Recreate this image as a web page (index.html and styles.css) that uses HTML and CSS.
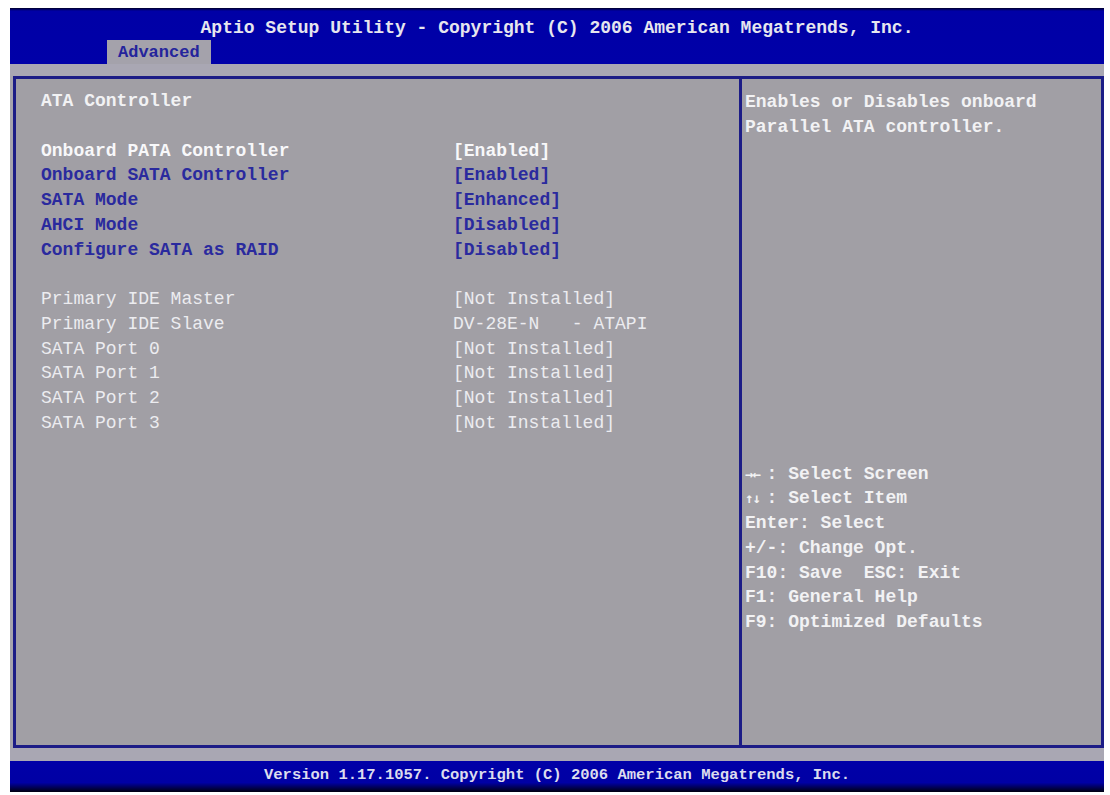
FILE: index.html
```html
<!DOCTYPE html>
<html lang="en">
<head>
    <meta charset="UTF-8">
    <meta name="viewport" content="width=device-width, initial-scale=1.0">
    <title>Aptio Setup Utility</title>
    <link rel="stylesheet" href="styles.css">
</head>
<body>

<div class="screen">

    <!-- Title bar with the tab row -->
    <div class="header">
        <div class="title">Aptio Setup Utility - Copyright (C) 2006 American Megatrends, Inc.</div>
        <div class="tabs">
            <span class="tab active">Advanced</span>
        </div>
    </div>

    <div class="strip"></div>

    <!-- Main frame -->
    <div class="frame">
        <div class="menu">
            <div class="line heading">ATA Controller</div>
            <div class="line"></div>

            <div class="item selected"><span>Onboard PATA Controller</span><span>[Enabled]</span></div>
            <div class="item option"><span>Onboard SATA Controller</span><span>[Enabled]</span></div>
            <div class="item option"><span>SATA Mode</span><span>[Enhanced]</span></div>
            <div class="item option"><span>AHCI Mode</span><span>[Disabled]</span></div>
            <div class="item option"><span>Configure SATA as RAID</span><span>[Disabled]</span></div>

            <div class="line"></div>

            <div class="item info"><span>Primary IDE Master</span><span>[Not Installed]</span></div>
            <div class="item info"><span>Primary IDE Slave</span><span>DV-28E-N   - ATAPI</span></div>
            <div class="item info"><span>SATA Port 0</span><span>[Not Installed]</span></div>
            <div class="item info"><span>SATA Port 1</span><span>[Not Installed]</span></div>
            <div class="item info"><span>SATA Port 2</span><span>[Not Installed]</span></div>
            <div class="item info"><span>SATA Port 3</span><span>[Not Installed]</span></div>
        </div>

        <div class="help">
            <div class="line">Enables or Disables onboard</div>
            <div class="line">Parallel ATA controller.</div>

            <div class="keys">
                <div class="line"><span class="arrows">&rarr;&larr;</span>: Select Screen</div>
                <div class="line"><span class="arrows">&uarr;&darr;</span>: Select Item</div>
                <div class="line">Enter: Select</div>
                <div class="line">+/-: Change Opt.</div>
                <div class="line">F10: Save  ESC: Exit</div>
                <div class="line">F1: General Help</div>
                <div class="line">F9: Optimized Defaults</div>
            </div>
        </div>
    </div>

    <div class="strip bottom"></div>

    <div class="footer">Version 1.17.1057. Copyright (C) 2006 American Megatrends, Inc.</div>

</div>

</body>
</html>
```

FILE: styles.css
```css
body {
    margin: 0;
    background-color: #ffffff;
    font-family: "Liberation Mono", "DejaVu Sans Mono", monospace;
    font-size: 18px;
}

.screen {
    margin: 8px 0 0 10px;
    width: 1094px;
    background-color: #a6a4ad;
}

/* header */

.header {
    height: 56px;
    background: linear-gradient(#00002a 0, #0000a6 3px, #0000a8 100%);
    color: #e6e6ee;
}

.title {
    padding-top: 8px;
    height: 24px;
    line-height: 24px;
    text-align: center;
    font-weight: bold;
}

.tabs {
    display: flex;
    padding-left: 97px;
}

.tab {
    height: 24px;
    line-height: 25px;
    padding: 0 11px;
    font-weight: bold;
    font-size: 17px;
}

.tab.active {
    background-color: #a4a2ab;
    color: #24249c;
}

.strip {
    height: 12px;
    background-color: #a9a7b3;
}

.strip.bottom {
    height: 13px;
}

/* main frame */

.frame {
    display: flex;
    height: 666px;
    margin-left: 3px;
    border: 3px solid #1c1c86;
    background-color: #a19fa5;
}

.menu {
    width: 698px;
    padding: 10px 0 0 25px;
}

.help {
    flex: 1;
    border-left: 3px solid #1c1c86;
    padding: 11px 0 0 3px;
    color: #f2f2f4;
    font-weight: bold;
}

.line {
    height: 24.75px;
    line-height: 24.75px;
    white-space: pre;
}

.arrows {
    display: inline-block;
    width: 21.6px;
    font-family: "DejaVu Sans Mono", monospace;
    font-size: 14px;
    letter-spacing: -1px;
}

.heading {
    color: #f2f2f4;
    font-weight: bold;
}

.item {
    display: grid;
    grid-template-columns: 412px auto;
    height: 24.75px;
    line-height: 24.75px;
    white-space: pre;
}

.item.selected {
    color: #f8f8fa;
    font-weight: bold;
}

.item.option {
    color: #2a2a9e;
    font-weight: bold;
}

.item.info {
    color: #ececf0;
}

.keys {
    margin-top: 322px;
}

/* footer */

.footer {
    height: 31px;
    line-height: 28px;
    background: linear-gradient(#0000a8 0, #0000a4 70%, #000040 90%, #000010 100%);
    color: #dcdcee;
    text-align: center;
    font-size: 15.5px;
    font-weight: bold;
}
```
